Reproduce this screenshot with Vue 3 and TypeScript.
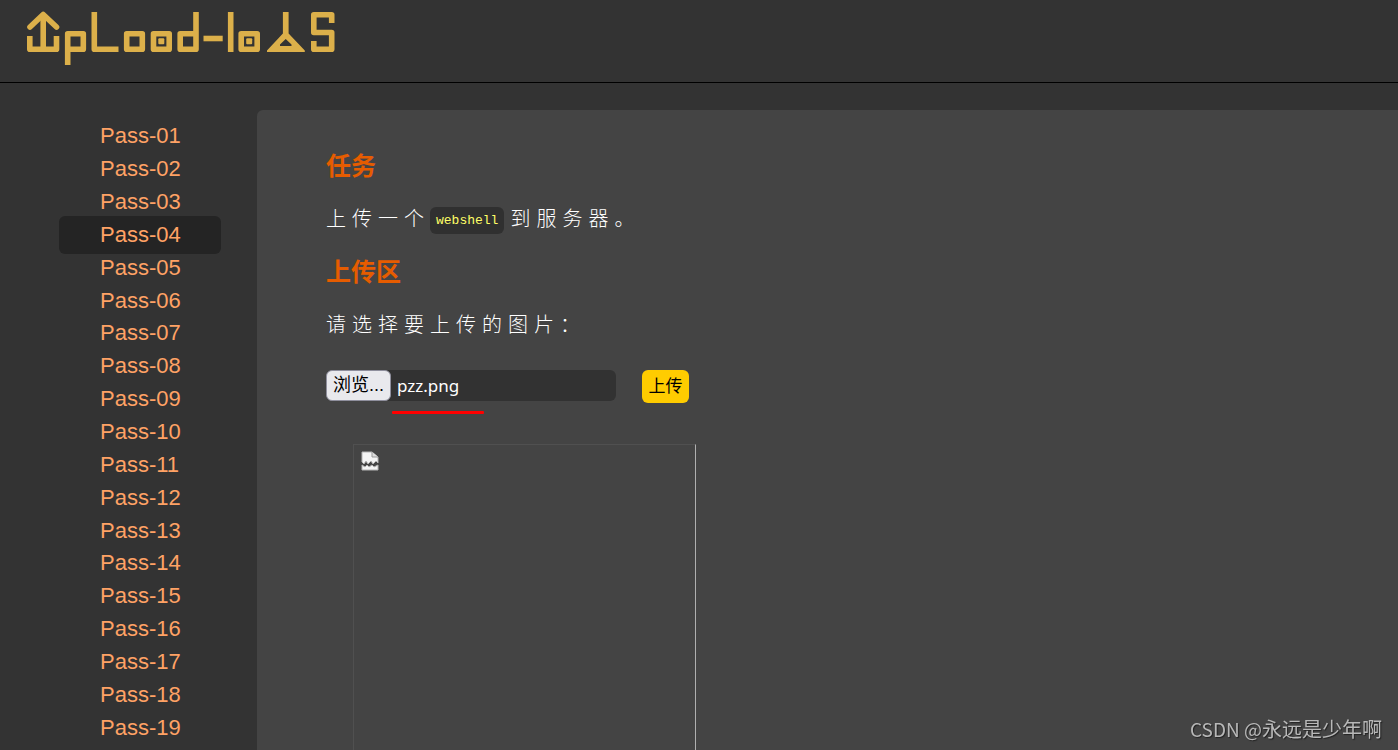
<script setup lang="ts">
import { ref } from 'vue'

const passes: string[] = Array.from(
  { length: 19 },
  (_, i) => `Pass-${String(i + 1).padStart(2, '0')}`,
)
const current = ref('Pass-04')
const fileName = ref('pzz.png')

function onPick(event: Event) {
  const file = (event.target as HTMLInputElement).files?.[0]
  if (file) fileName.value = file.name
}
</script>

<template>
  <div class="page">
    <header class="header">
      <a class="logo" href="#" aria-label="upload-labs">
        <svg width="312" height="56" viewBox="25 10 312 56" fill="none" stroke="#dcb04a" stroke-width="5.600">
          <path d="M30 27 43.200 14.500 56.500 27" stroke-linejoin="round" stroke-linecap="round" />
          <path d="M43.200 14V50" />
          <path d="M29.800 36V49.300H56.500V36" stroke-linejoin="round" />
          <path d="M67.700 65V33.700H83.300V49.300H67.700" stroke-linejoin="round" />
          <path d="M94.300 12V49.300H118.500" stroke-linejoin="round" />
          <path d="M126.700 33.700H142.300V49.300H126.700Z" stroke-linejoin="round" />
          <path d="M153.500 33.700H169.200V49.300H153.500Z" stroke-linejoin="round" />
          <rect x="158.300" y="38.300" width="6" height="6" rx="1" fill="#dcb04a" stroke="none" />
          <path d="M196 12V49.300H180.200V33.700H196" stroke-linejoin="round" />
          <path d="M203.500 38.500H222.700" />
          <path d="M230.700 12V52" />
          <path d="M241.200 33.700H257.200V49.300H241.200Z" stroke-linejoin="round" />
          <rect x="246.200" y="38.300" width="6" height="6" rx="1" fill="#dcb04a" stroke="none" />
          <path
            d="M282.900 12h5.700v21.500L304.800 50.500V52H267v-1.500L282.900 33.500ZM285.700 39l-5.700 5.500V46h11.500v-1.500Z"
            fill="#dcb04a"
            fill-rule="evenodd"
            stroke="none"
          />
          <path d="M331.700 23V14.800H313.800V32.500H331.700V49.300H313.800V41" stroke-linejoin="round" />
        </svg>
      </a>
    </header>

    <div class="body">
      <nav class="sidebar">
        <ul class="menu">
          <li v-for="pass in passes" :key="pass">
            <a
              :href="`#${pass}`"
              class="link"
              :class="{ active: pass === current }"
              @click="current = pass"
            >{{ pass }}</a>
          </li>
        </ul>
      </nav>

      <main class="panel">
        <h3>任务</h3>
        <p>上传一个<code>webshell</code>到服务器。</p>
        <h3>上传区</h3>
        <p id="file-label">请选择要上传的图片：</p>
        <form class="form" @submit.prevent>
          <label class="file">
            <input class="native" type="file" aria-labelledby="file-label" @change="onPick" />
            <span class="browse">浏览...</span>
            <span class="name">{{ fileName }}</span>
          </label>
          <button class="submit" type="submit">上传</button>
        </form>
        <div class="preview">
          <svg width="18" height="20" viewBox="0 0 18 20">
            <path d="M1 1h10l6 5v6l-2-2-3 3-2-3-3 3-2-3-2 3-2-2Z" fill="#f4f4f4" stroke="#b4b4b4" />
            <path d="M11 1v5h6" fill="#ddd" stroke="#999" />
            <path d="M1 14l3 2 2-2 2 2 3-2 2 2 4-2v5H1Z" fill="#f4f4f4" stroke="#b4b4b4" />
          </svg>
        </div>
      </main>
    </div>

    <div class="watermark"><span class="site">CSDN @</span>永远是少年啊</div>
  </div>
</template>

<style>
body {
  margin: 0;
  background: #333;
}
</style>

<style scoped>
.page {
  display: flex;
  flex-direction: column;
  height: 100vh;
  overflow: hidden;
  background: #333;
  font-family: "Liberation Sans", "Noto Sans CJK SC", sans-serif;
}

.header {
  box-sizing: border-box;
  flex: none;
  height: 83px;
  padding: 10px 25px;
  border-bottom: 1px solid #000;
}

.logo {
  display: inline-block;
}

.logo svg {
  display: block;
}

.body {
  display: flex;
  flex: 1;
  min-height: 0;
  padding-top: 27px;
}

.sidebar {
  flex: none;
  padding: 10px 36px 0 59px;
}

.menu {
  display: grid;
  grid-template-rows: repeat(19, minmax(0, 1fr));
  width: 162px;
  height: 624px;
  margin: 0;
  padding: 0;
  list-style: none;
}

.menu li {
  display: grid;
  align-content: center;
}

.link {
  padding-left: 41px;
  border-radius: 6px;
  color: #ffa265;
  font-size: 22px;
  line-height: 38px;
  text-decoration: none;
  white-space: nowrap;
}

.link.active {
  background: #242424;
}

.panel {
  display: flex;
  flex: 1;
  flex-direction: column;
  padding: 38px 0 0 69px;
  border-radius: 6px 0 0 0;
  background: #444;
  color: #fff;
}

h3 {
  margin: 0 0 20px;
  color: #e65c00;
  font-size: 25px;
  line-height: 36px;
}

p {
  margin: 0 0 20px;
  font-size: 20px;
  font-weight: 300;
  letter-spacing: 6px;
  line-height: 30px;
}

code {
  display: inline-block;
  margin-right: 6px;
  padding: 0 6px;
  border-radius: 6px;
  background: #303030;
  color: #ff6;
  font-family: "Liberation Mono", monospace;
  font-size: 13px;
  letter-spacing: normal;
  line-height: 27px;
  vertical-align: middle;
}

.form {
  display: flex;
  align-items: flex-start;
  gap: 26px;
  margin-top: 10px;
}

.file {
  position: relative;
  display: flex;
  align-items: center;
  width: 290px;
  height: 31px;
  border-radius: 6px;
  background: #323232;
  font-size: 18px;
}

.file::after {
  content: "";
  position: absolute;
  top: 41px;
  left: 66px;
  width: 92px;
  height: 3px;
  border-radius: 1px;
  background: #f00;
}

.native {
  position: absolute;
  inset: 0;
  opacity: 0;
}

.browse {
  box-sizing: border-box;
  width: 65px;
  height: 31px;
  border: 1px solid #8f8f9d;
  border-radius: 6px;
  background: #e9e9ed;
  color: #000;
  line-height: 29px;
  text-align: center;
}

.name {
  padding-left: 6px;
  font-family: "Noto Sans", sans-serif;
  font-size: 17px;
  line-height: 30px;
}

.submit {
  width: 47px;
  height: 33px;
  padding: 0;
  border: 0;
  border-radius: 6px;
  background: #fc0;
  color: #000;
  font-family: inherit;
  font-size: 17px;
  line-height: 30px;
}

.preview {
  box-sizing: border-box;
  flex: 1;
  width: 343px;
  margin: 41px 0 0 27px;
  padding: 6px 7px;
  border: 1px solid #505050;
  border-right-color: #b0b0b0;
  border-bottom: 0;
}

.watermark {
  position: fixed;
  right: 16px;
  bottom: 6px;
  color: #b8b8b8;
  font-family: "Noto Sans CJK SC", sans-serif;
  font-size: 20px;
  line-height: 30px;
  text-shadow: 1px 1px 1px #222;
}

.site {
  font-size: 19px;
}
</style>
